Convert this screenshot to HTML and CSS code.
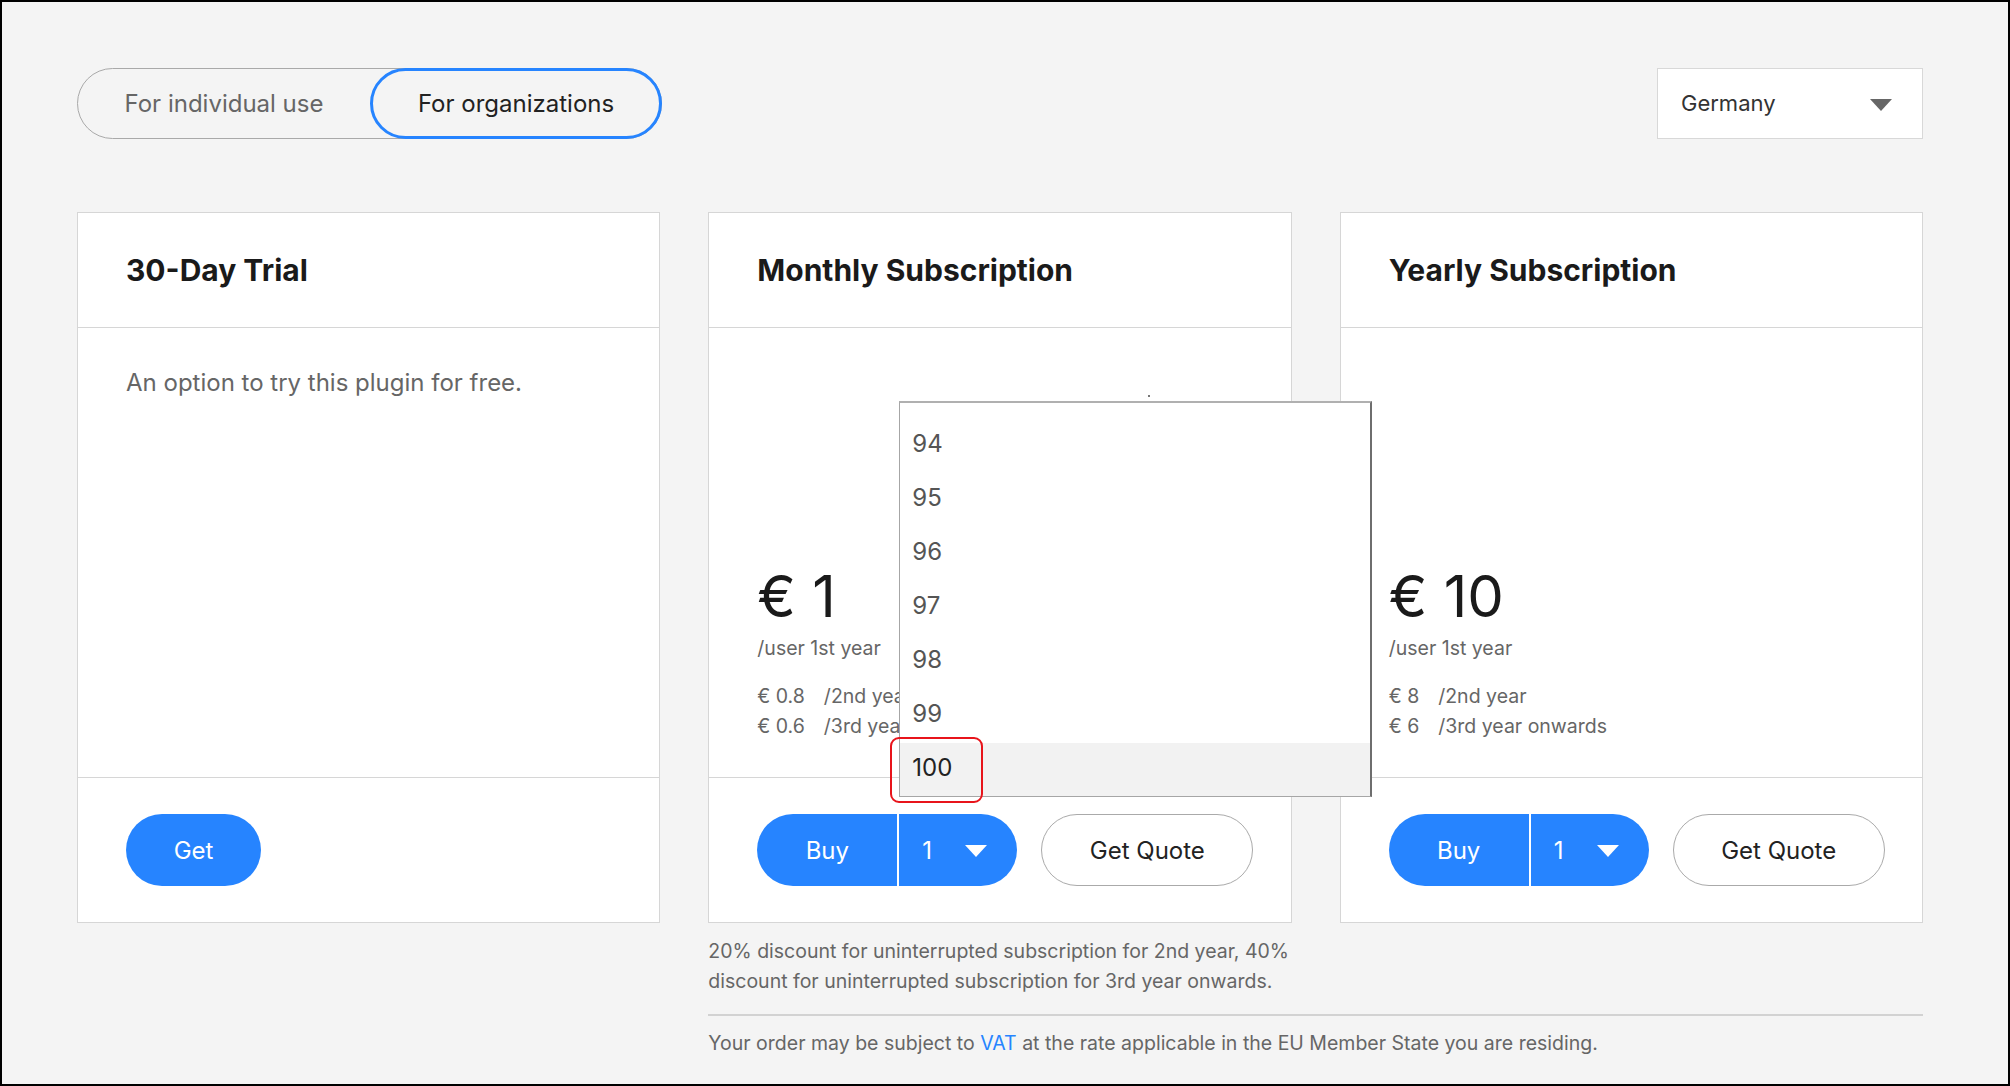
FILE: index.html
```html
<!DOCTYPE html>
<html lang="en">
<head>
<meta charset="utf-8">
<title>Pricing</title>
<link rel="stylesheet" href="styles.css">
</head>
<body>
<div class="frame">
  <div class="page">
    <div class="topbar">
      <div class="toggle">
        <div class="seg">For individual use</div>
        <div class="seg active">For organizations</div>
      </div>
      <div class="country"><span>Germany</span><span class="caret"></span></div>
    </div>

    <div class="plans">
      <section class="card">
        <div class="card-head"><h2>30-Day Trial</h2></div>
        <div class="card-body"><p class="desc">An option to try this plugin for free.</p></div>
        <div class="card-foot"><div class="btn-get">Get</div></div>
      </section>

      <section class="card card-monthly">
        <div class="card-head"><h2>Monthly Subscription</h2></div>
        <div class="card-body price-body">
          <div class="price">€ 1</div>
          <div class="per">/user 1st year</div>
          <div class="later">
            <div><span class="amt">€ 0.8</span>/2nd year</div>
            <div><span class="amt">€ 0.6</span>/3rd year onwards</div>
          </div>
        </div>
        <div class="card-foot">
          <div class="buy"><span class="buy-label">Buy</span><span class="buy-qty"><span>1</span><span class="caret-w"></span></span></div>
          <div class="quote">Get Quote</div>
        </div>
        <span class="dot"></span>
        <div class="qty-list">
          <div class="opt">94</div>
          <div class="opt">95</div>
          <div class="opt">96</div>
          <div class="opt">97</div>
          <div class="opt">98</div>
          <div class="opt">99</div>
          <div class="opt selected">100</div>
        </div>
        <div class="marker"></div>
      </section>

      <section class="card">
        <div class="card-head"><h2>Yearly Subscription</h2></div>
        <div class="card-body price-body">
          <div class="price">€ 10</div>
          <div class="per">/user 1st year</div>
          <div class="later">
            <div><span class="amt">€ 8</span>/2nd year</div>
            <div><span class="amt">€ 6</span>/3rd year onwards</div>
          </div>
        </div>
        <div class="card-foot">
          <div class="buy"><span class="buy-label">Buy</span><span class="buy-qty"><span>1</span><span class="caret-w"></span></span></div>
          <div class="quote">Get Quote</div>
        </div>
      </section>

      <div class="notes">
        <p class="discount">20% discount for uninterrupted subscription for 2nd year, 40%<br>discount for uninterrupted subscription for 3rd year onwards.</p>
        <hr class="rule">
        <p class="vat">Your order may be subject to <a class="link" href="#">VAT</a> at the rate applicable in the EU Member State you are residing.</p>
      </div>
    </div>
  </div>
</div>
</body>
</html>
```

FILE: styles.css
```css
html, body {
  margin: 0;
  padding: 0;
}

body {
  font-family: Inter, "Noto Sans", "Liberation Sans", sans-serif;
  color: #1a1a1a;
}

.frame {
  box-sizing: border-box;
  height: 1086px;
  border: 2px solid #000;
  background: #f4f4f4;
  overflow: hidden;
}

.page {
  width: 1846px;
  margin-left: 75px;
  padding-top: 66px;
}

/* top bar */
.topbar {
  display: flex;
  justify-content: space-between;
  align-items: flex-start;
}

.toggle {
  display: flex;
  box-sizing: border-box;
  height: 71px;
  border: 1px solid #a9a9a9;
  border-radius: 36px;
}

.seg {
  box-sizing: border-box;
  width: 292px;
  display: flex;
  align-items: center;
  justify-content: center;
  font-size: 24px;
  color: #666;
}

.seg.active {
  color: #222;
  border: 3px solid #2684ff;
  border-radius: 36px;
  margin: -1px -1px -1px 0;
}

.country {
  box-sizing: border-box;
  width: 266px;
  height: 71px;
  background: #fff;
  border: 1px solid #d8d8d8;
  display: flex;
  align-items: center;
  justify-content: space-between;
  padding: 0 30px 2px 23px;
  font-size: 22px;
  color: #333;
}

.caret {
  width: 0;
  height: 0;
  border-left: 11px solid transparent;
  border-right: 11px solid transparent;
  border-top: 12px solid #666;
  margin-top: 4px;
}

/* plans */
.plans {
  display: grid;
  grid-template-columns: repeat(3, minmax(0, 1fr));
  column-gap: 48px;
  margin-top: 73px;
}

.card {
  box-sizing: border-box;
  height: 711px;
  background: #fff;
  border: 1px solid #d6d6d6;
  display: flex;
  flex-direction: column;
}

.card-monthly {
  position: relative;
}

.card-head {
  box-sizing: border-box;
  height: 115px;
  border-bottom: 1px solid #d6d6d6;
  display: flex;
  align-items: center;
  padding: 0 48px;
}

.card-head h2 {
  margin: 0;
  font-size: 30px;
  font-weight: 700;
  color: #1a1a1a;
}

.card-body {
  box-sizing: border-box;
  height: 450px;
  border-bottom: 1px solid #d6d6d6;
  padding: 37px 48px 36px;
}

.desc {
  margin: 0;
  font-size: 24px;
  line-height: 36px;
  color: #666;
}

.price-body {
  display: flex;
  flex-direction: column;
  justify-content: flex-end;
}

.price {
  font-size: 58px;
  line-height: 56px;
  color: #1a1a1a;
}

.per {
  margin-top: 10px;
  font-size: 19.5px;
  line-height: 28px;
  color: #666;
}

.later {
  margin-top: 19px;
  font-size: 19.5px;
  line-height: 30px;
  color: #666;
}

.amt {
  display: inline-block;
  margin-right: 19px;
}

.card-foot {
  flex: 1;
  display: flex;
  align-items: flex-start;
  gap: 24px;
  padding: 36px 48px 0;
}

.btn-get {
  flex-shrink: 0;
  width: 135px;
  height: 72px;
  border-radius: 36px;
  background: #2684ff;
  color: #fff;
  font-size: 24px;
  display: flex;
  align-items: center;
  justify-content: center;
}

.buy {
  flex-shrink: 0;
  display: flex;
  height: 72px;
  border-radius: 36px;
  background: #2684ff;
  color: #fff;
  font-size: 24px;
  overflow: hidden;
}

.buy-label {
  width: 140px;
  display: flex;
  align-items: center;
  justify-content: center;
  border-right: 2px solid #fff;
}

.buy-qty {
  width: 118px;
  box-sizing: border-box;
  display: flex;
  align-items: center;
  justify-content: space-between;
  padding: 0 30px 0 23px;
}

.caret-w {
  width: 0;
  height: 0;
  border-left: 11px solid transparent;
  border-right: 11px solid transparent;
  border-top: 12px solid #fff;
  margin-top: 2px;
}

.quote {
  flex-shrink: 0;
  box-sizing: border-box;
  width: 212px;
  height: 72px;
  border: 1px solid #aaa;
  border-radius: 36px;
  background: #fff;
  color: #222;
  font-size: 24px;
  display: flex;
  align-items: center;
  justify-content: center;
}

/* open quantity list (overlay) */
.qty-list {
  position: absolute;
  left: 190px;
  top: 188px;
  width: 473px;
  height: 396px;
  box-sizing: border-box;
  background: #fff;
  border: 1px solid #a6a6a6;
  border-top: 2px solid #b0b0b0;
  border-right: 2px solid #6e6e6e;
  padding-top: 16px;
  overflow: hidden;
  z-index: 5;
}

.opt {
  box-sizing: border-box;
  height: 54px;
  display: flex;
  align-items: center;
  padding: 0 0 5px 12px;
  font-size: 24px;
  color: #555;
}

.opt.selected {
  background: #f2f2f2;
  color: #222;
}

.marker {
  position: absolute;
  left: 181px;
  top: 524px;
  width: 93px;
  height: 66px;
  box-sizing: border-box;
  border: 2px solid #e8141b;
  border-radius: 9px;
  z-index: 6;
}

.dot {
  position: absolute;
  left: 439px;
  top: 182px;
  width: 2px;
  height: 2px;
  background: #777;
}

/* notes */
.notes {
  grid-column: 2 / 4;
  margin-top: 13px;
  font-size: 19.5px;
  line-height: 30px;
  color: #666;
}

.discount,
.vat {
  margin: 0;
}

.rule {
  border: 0;
  border-top: 2px solid #d2d2d2;
  margin: 18px 0 12px;
}

.link {
  color: #2684ff;
  text-decoration: none;
}
```
